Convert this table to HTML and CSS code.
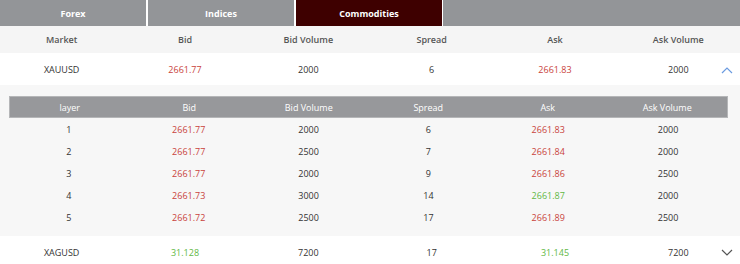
FILE: index.html
```html
<!DOCTYPE html>
<html>
<head>
<meta charset="utf-8">
<link rel="stylesheet" href="styles.css">
</head>
<body>
<div class="tabs">
  <div class="tab">Forex</div>
  <div class="tab">Indices</div>
  <div class="tab active">Commodities</div>
  <div class="tab-fill"></div>
</div>
<div class="grid head">
  <div>Market</div><div>Bid</div><div>Bid Volume</div><div>Spread</div><div>Ask</div><div>Ask Volume</div>
</div>
<div class="grid row">
  <div>XAUUSD</div><div class="red">2661.77</div><div>2000</div><div>6</div><div class="red">2661.83</div><div>2000</div>
  <svg class="chev up" width="12" height="8" viewBox="0 0 12 8"><path d="M1 7 L6 2 L11 7" fill="none" stroke="#6b9be0" stroke-width="1.2"/></svg>
</div>
<div class="expand">
  <div class="inner">
    <div class="grid ihead">
      <div>layer</div><div>Bid</div><div>Bid Volume</div><div>Spread</div><div>Ask</div><div>Ask Volume</div>
    </div>
    <div class="grid irow"><div>1</div><div class="red">2661.77</div><div>2000</div><div>6</div><div class="red">2661.83</div><div>2000</div></div>
    <div class="grid irow"><div>2</div><div class="red">2661.77</div><div>2500</div><div>7</div><div class="red">2661.84</div><div>2000</div></div>
    <div class="grid irow"><div>3</div><div class="red">2661.77</div><div>2000</div><div>9</div><div class="red">2661.86</div><div>2500</div></div>
    <div class="grid irow"><div>4</div><div class="red">2661.73</div><div>3000</div><div>14</div><div class="green">2661.87</div><div>2000</div></div>
    <div class="grid irow"><div>5</div><div class="red">2661.72</div><div>2500</div><div>17</div><div class="red">2661.89</div><div>2500</div></div>
  </div>
</div>
<div class="grid row">
  <div>XAGUSD</div><div class="green">31.128</div><div>7200</div><div>17</div><div class="green">31.145</div><div>7200</div>
  <svg class="chev down" width="12" height="8" viewBox="0 0 12 8"><path d="M1 1 L6 6 L11 1" fill="none" stroke="#555" stroke-width="1.2"/></svg>
</div>
</body>
</html>
```
FILE: styles.css
```css
* { box-sizing: border-box; }
body {
  margin: 0;
  background: #fff;
  font-family: "Open Sans", "Noto Sans", sans-serif;
  font-size: 9px;
  color: #333;
  overflow: hidden;
}
.tabs {
  display: flex;
  height: 26px;
  background: #fff;
  gap: 2px;
}
.tab {
  width: 146px;
  background: #939598;
  color: #fff;
  font-weight: 700;
  display: flex;
  align-items: center;
  justify-content: center;
}
.tab.active { background: #3e0000; }
.tab-fill {
  flex: 1;
  background: #939598;
  margin-left: -1px;
}
.grid {
  display: grid;
  grid-template-columns: repeat(6, 1fr);
  align-items: center;
  text-align: center;
}
.head {
  height: 27px;
  background: #f5f5f5;
  color: #555;
  font-weight: 600;
}
.row {
  height: 32px;
  background: #fff;
  position: relative;
}
.chev {
  position: absolute;
  right: 7px;
  top: 13px;
}
.expand {
  background: #f7f7f7;
  padding: 11px 12px 8px 9px;
  height: 151px;
}
.ihead {
  height: 22px;
  background: #97989b;
  border: 1px solid #b5b6b8;
  color: #fff;
}
.irow { height: 22px; }
.red { color: #c9433c; }
.green { color: #62b844; }
```
